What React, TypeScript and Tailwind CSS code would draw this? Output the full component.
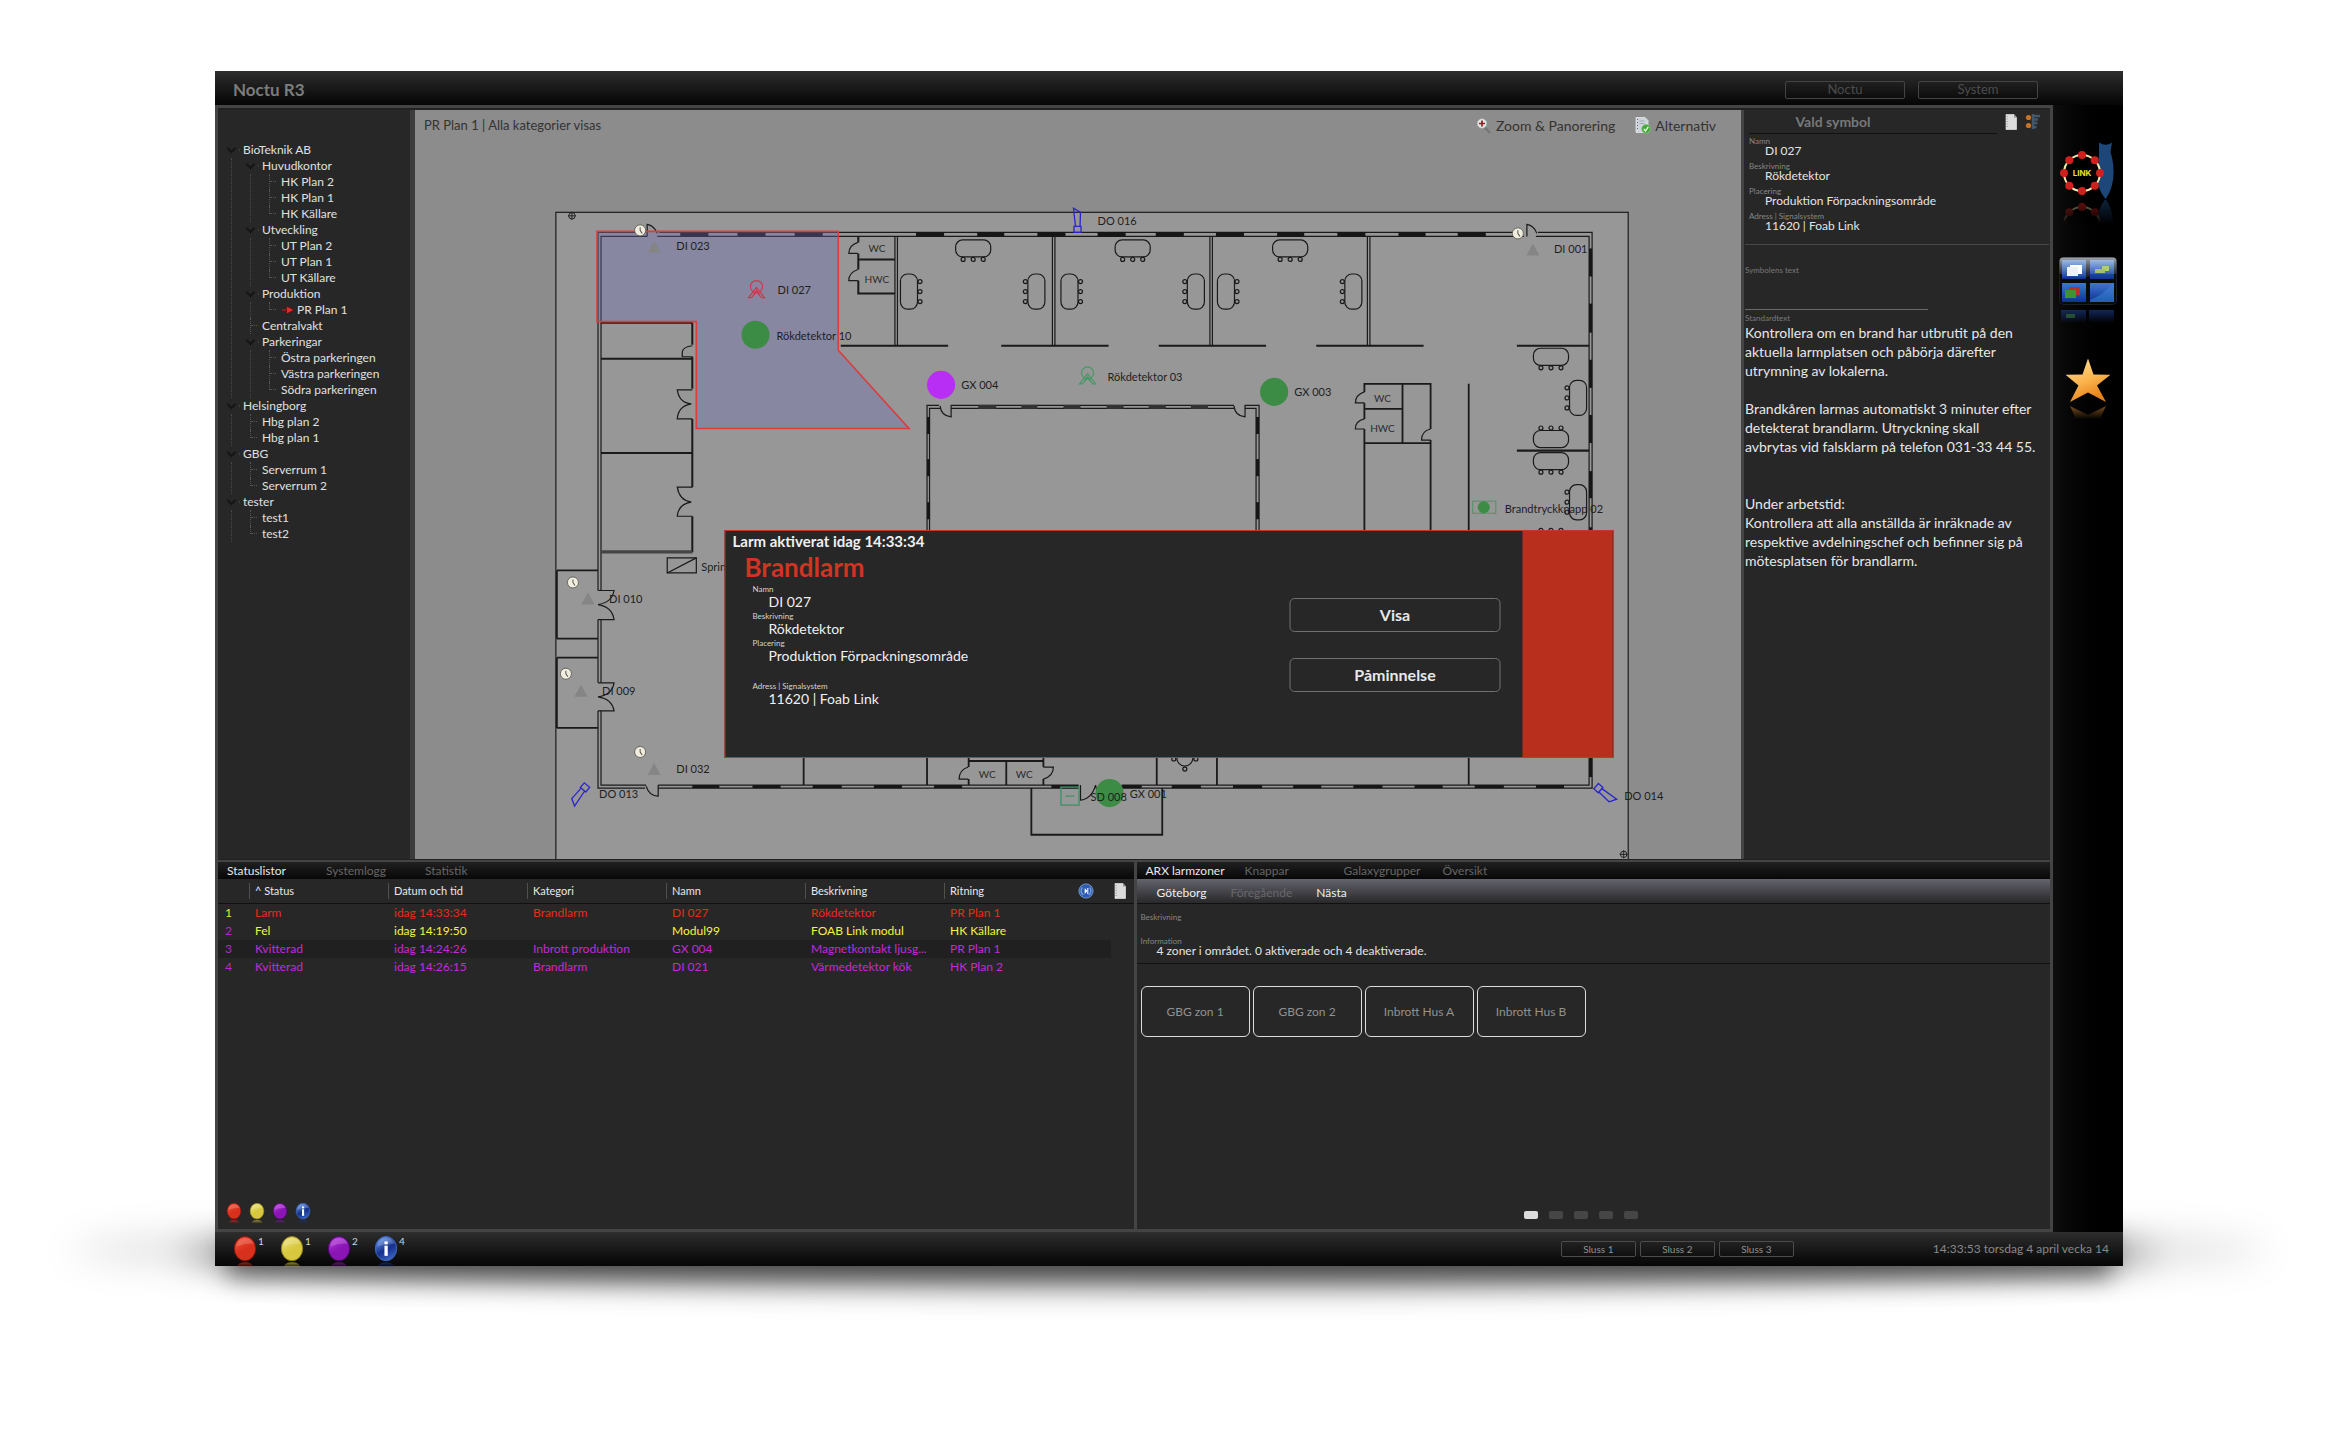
import { useState } from 'react';
import type { ReactNode } from 'react';
import clsx from 'clsx';

/* ---------- data ---------- */

type TreeNode = { name: string; children?: TreeNode[]; current?: boolean };

const sites: TreeNode[] = [
  {
    name: 'BioTeknik AB',
    children: [
      { name: 'Huvudkontor', children: [{ name: 'HK Plan 2' }, { name: 'HK Plan 1' }, { name: 'HK Källare' }] },
      { name: 'Utveckling', children: [{ name: 'UT Plan 2' }, { name: 'UT Plan 1' }, { name: 'UT Källare' }] },
      { name: 'Produktion', children: [{ name: 'PR Plan 1', current: true }] },
      { name: 'Centralvakt' },
      {
        name: 'Parkeringar',
        children: [{ name: 'Östra parkeringen' }, { name: 'Västra parkeringen' }, { name: 'Södra parkeringen' }],
      },
    ],
  },
  { name: 'Helsingborg', children: [{ name: 'Hbg plan 2' }, { name: 'Hbg plan 1' }] },
  { name: 'GBG', children: [{ name: 'Serverrum 1' }, { name: 'Serverrum 2' }] },
  { name: 'tester', children: [{ name: 'test1' }, { name: 'test2' }] },
];

const columns = ['^ Status', 'Datum och tid', 'Kategori', 'Namn', 'Beskrivning'];

const events = [
  { id: 1, idColor: 'text-[#e6e63c]', color: 'text-[#e62c20]', cells: ['Larm', 'idag 14:33:34', 'Brandlarm', 'DI 027', 'Rökdetektor', 'PR Plan 1'] },
  { id: 2, idColor: 'text-[#b42ac6]', color: 'text-[#f4f440]', cells: ['Fel', 'idag 14:19:50', '', 'Modul99', 'FOAB Link modul', 'HK Källare'] },
  { id: 3, idColor: 'text-[#b42ac6]', color: 'text-[#c42ad8]', cells: ['Kvitterad', 'idag 14:24:26', 'Inbrott produktion', 'GX 004', 'Magnetkontakt ljusg...', 'PR Plan 1'] },
  { id: 4, idColor: 'text-[#b42ac6]', color: 'text-[#c42ad8]', cells: ['Kvitterad', 'idag 14:26:15', 'Brandlarm', 'DI 021', 'Värmedetektor kök', 'HK Plan 2'] },
];

const details = [
  ['Namn', 'DI 027'],
  ['Beskrivning', 'Rökdetektor'],
  ['Placering', 'Produktion Förpackningsområde'],
  ['Adress | Signalsystem', '11620 | Foab Link'],
];

/* ---------- small icons ---------- */

type OrbTone = 'red' | 'yellow' | 'purple' | 'info';

const orbTones: Record<OrbTone, [string, string, string]> = {
  red: ['#f0523a', '#d8301c', '#8a1408'],
  yellow: ['#eee27a', '#d8c840', '#8c8018'],
  purple: ['#b83ae0', '#8a14b4', '#4a0668'],
  info: ['#6f9cf0', '#15308c', '#3c66c0'],
};

function Orb({ tone, id, className }: { tone: OrbTone; id: string; className?: string }) {
  const [light, mid, dark] = orbTones[tone];
  return (
    <svg viewBox="0 0 24 32" className={className} aria-hidden="true">
      <defs>
        <linearGradient id={id} x1="0.2" y1="0" x2="0.7" y2="1">
          <stop offset="0" stopColor={light} />
          <stop offset="0.55" stopColor={mid} />
          <stop offset="1" stopColor={tone === 'info' ? dark : mid} />
        </linearGradient>
        <linearGradient id={id + 'r'} x1="0" y1="0" x2="0" y2="1">
          <stop offset="0" stopColor={mid} stopOpacity="0.65" />
          <stop offset="1" stopColor={mid} stopOpacity="0.1" />
        </linearGradient>
      </defs>
      <ellipse cx="12" cy="13" rx="11" ry="12.5" fill={`url(#${id})`} stroke={dark} strokeWidth="1" />
      <path d="M3 11 A9.5 10 0 0 1 21 8 Q13 7 3 11Z" fill="#fff" opacity="0.18" />
      {tone === 'info' && (
        <g fill="#fff">
          <rect x="10.4" y="10" width="3.4" height="10.5" />
          <rect x="10.4" y="5.6" width="3.4" height="3" />
        </g>
      )}
      <path d="M3.5 32 Q4.5 27.2 12 27 Q19.500 27.2 20.500 32Z" fill={`url(#${id}r)`} />
    </svg>
  );
}

function PageIcon({ className }: { className?: string }) {
  return (
    <svg viewBox="0 0 12 16" className={className} aria-hidden="true">
      <path d="M1 0.500 H9 L11.500 3.500 V15.500 H1Z" fill="#dcdcdc" stroke="#f4f4f4" strokeWidth="0.6" />
      <path d="M9 0.500 V3.500 H11.500Z" fill="#8c8c8c" />
      <path d="M2 2v12" stroke="#777" strokeWidth="0.9" strokeDasharray="1 1.500" />
    </svg>
  );
}

function TreeIcon({ className }: { className?: string }) {
  return (
    <svg viewBox="0 0 16 18" className={className} aria-hidden="true">
      <circle cx="3.500" cy="4.500" r="2.600" fill="#c87424" />
      <circle cx="3.500" cy="12.500" r="2.600" fill="#c87424" />
      <path d="M8 1v15M8 3h7M8 6.500h5M8 10h4.500M8 14h3.500" stroke="#43586c" strokeWidth="2.600" fill="none" />
    </svg>
  );
}

function MagnifierIcon({ className }: { className?: string }) {
  return (
    <svg viewBox="0 0 16 16" className={className} aria-hidden="true">
      <path d="M8.500 9 L14 15" stroke="#747474" strokeWidth="2" />
      <circle cx="6" cy="5.500" r="4.800" fill="#e4e4e4" stroke="#a4a4a4" strokeWidth="0.600" />
      <path d="M6 2.500v6M3 5.500h6" stroke="#a01424" strokeWidth="1.700" />
    </svg>
  );
}

function OptionsIcon({ className }: { className?: string }) {
  return (
    <svg viewBox="0 0 16 17" className={className} aria-hidden="true">
      <path d="M1 0.500h9l3 3v12H1Z" fill="#cfd4dc" stroke="#eceef2" strokeWidth="0.700" />
      <path d="M2.500 2v12" stroke="#5c6470" strokeWidth="1" strokeDasharray="1 2" />
      <path d="M4.500 4h5M4.500 6.500h5" stroke="#9aa4b4" strokeWidth="0.900" />
      <circle cx="11" cy="11.800" r="4.400" fill="#46a83c" stroke="#8cd07c" strokeWidth="0.600" />
      <path d="M8.800 12l1.700 1.900 2.800-4" stroke="#e8ffe4" strokeWidth="1.300" fill="none" />
    </svg>
  );
}

function JumpIcon({ className }: { className?: string }) {
  return (
    <svg viewBox="0 0 18 18" className={className} aria-hidden="true">
      <circle cx="9" cy="9" r="8" fill="#2c5cb4" stroke="#88a8dc" strokeWidth="0.900" />
      <path d="M5 5A5.500 5.500 0 0 0 6 13.500M13 5A5.500 5.500 0 0 1 12 13.500" fill="none" stroke="#7ca0dc" strokeWidth="1.400" />
      <path d="M7.500 5.500v7l3-3.500z" fill="#fff" />
      <path d="M11 5.500v7" stroke="#fff" strokeWidth="1.200" />
    </svg>
  );
}

/* ---------- rail icons ---------- */

function LinkLogo() {
  const beads = Array.from({ length: 8 }, (_, i) => (i * Math.PI) / 4);
  return (
    <svg viewBox="0 0 58 82" className="w-[58px]" aria-hidden="true">
      <defs>
        <linearGradient id="linkFade" x1="0" y1="0" x2="0" y2="1">
          <stop offset="0" stopColor="#fff" stopOpacity="0.5" />
          <stop offset="1" stopColor="#fff" stopOpacity="0" />
        </linearGradient>
        <mask id="linkMask">
          <rect x="0" y="58" width="58" height="24" fill="url(#linkFade)" />
        </mask>
        <g id="linkMark">
          <path d="M40 0.500 Q46.500 5 53 0.500 L51.500 10 Q56 24 54 38 Q52 50 46.500 57 Q39 48 38 36 L40 14Z" fill="#1d4679" />
          <circle cx="23" cy="31" r="18" fill="#000" stroke="#f2e8b0" strokeWidth="2" />
          {beads.map((a) => (
            <circle key={a} cx={23 + 18 * Math.cos(a)} cy={31 + 18 * Math.sin(a)} r="4" fill="#d0201c" />
          ))}
        </g>
      </defs>
      <use href="#linkMark" />
      <text x="23" y="34" textAnchor="middle" className="fill-[#f0e020] font-[Inter,sans-serif] text-[8px] font-bold">LINK</text>
      <g mask="url(#linkMask)">
        <use href="#linkMark" transform="translate(0 114) scale(1 -1)" />
      </g>
    </svg>
  );
}

function WindowsIcon() {
  return (
    <svg viewBox="0 0 58 68" className="w-[58px]" aria-hidden="true">
      <defs>
        <linearGradient id="pane" x1="0" y1="0" x2="0" y2="1">
          <stop offset="0" stopColor="#3c78d0" />
          <stop offset="1" stopColor="#0c3490" />
        </linearGradient>
        <linearGradient id="gloss" x1="0" y1="0" x2="0" y2="1">
          <stop offset="0" stopColor="#dfe6ee" stopOpacity="0.7" />
          <stop offset="1" stopColor="#9ab0cc" stopOpacity="0.1" />
        </linearGradient>
        <linearGradient id="paneFade" x1="0" y1="0" x2="0" y2="1">
          <stop offset="0" stopColor="#1c3f94" stopOpacity="0.6" />
          <stop offset="1" stopColor="#1c3f94" stopOpacity="0" />
        </linearGradient>
      </defs>
      <rect x="0.500" y="0.500" width="57" height="47" rx="4" fill="#08090b" stroke="#1c1e22" />
      <rect x="3" y="3" width="24" height="19" fill="url(#pane)" />
      <rect x="31" y="3" width="24" height="19" fill="url(#pane)" />
      <rect x="3" y="26" width="24" height="19" fill="url(#pane)" />
      <rect x="31" y="26" width="24" height="19" fill="url(#pane)" />
      <path d="M31 43 Q44 38 53 27 H55 V45 H31Z" fill="#4484dc" opacity="0.5" />
      <path d="M0.500 17 V4 Q0.500 0.500 4 0.500 H54 Q57.500 0.500 57.500 4 V17 H31 V20 H3 V17Z" fill="url(#gloss)" />
      <rect x="11" y="8" width="12" height="9" fill="#fff" />
      <rect x="8" y="10" width="11" height="9" fill="#eef1f4" />
      <rect x="43" y="9" width="7" height="5" fill="#b4cc70" />
      <rect x="36" y="12" width="10" height="4" fill="#a4c068" />
      <rect x="10" y="30" width="11" height="8" fill="#b83028" />
      <rect x="6" y="33" width="11" height="8" fill="#3c9434" />
      <path d="M2 53h25v13h-25ZM30 53h25v13h-25Z" fill="url(#paneFade)" />
      <path d="M7 57h9v4H7z" fill="#3c8434" opacity="0.5" />
    </svg>
  );
}

function StarIcon() {
  return (
    <svg viewBox="0 0 46 62" className="w-[46px]" aria-hidden="true">
      <defs>
        <linearGradient id="star" x1="0" y1="0" x2="0.4" y2="1">
          <stop offset="0" stopColor="#ffe49c" />
          <stop offset="0.6" stopColor="#fbb34c" />
          <stop offset="1" stopColor="#e8821c" />
        </linearGradient>
        <linearGradient id="starFade" x1="0" y1="0" x2="0" y2="1">
          <stop offset="0" stopColor="#c87c30" stopOpacity="0.6" />
          <stop offset="1" stopColor="#c87c30" stopOpacity="0" />
        </linearGradient>
      </defs>
      <path d="M23 0.500 L28.500 16.500 L45.500 16.800 L32 27.500 L41 44 L23 34.500 L5 44 L13.500 27.500 L0.500 16.800 L17.500 16.500Z" fill="url(#star)" />
      <path d="M5 48 L23 57 L41 48 L35 61 H11Z" fill="url(#starFade)" />
    </svg>
  );
}

/* ---------- floor plan ---------- */

const northWindows = [[681, 28], [738, 28], [795, 28], [916, 28], [977, 27], [1037, 28], [1097, 28], [1155, 28], [1215, 28], [1276, 27], [1336, 28], [1397, 27], [1456, 28]];
const southWindows = [[693, 27], [753, 28], [813, 29], [874, 28], [934, 28], [1051, 27], [1121, 20], [1171, 29], [1232, 29], [1292, 28], [1352, 29], [1413, 28], [1473, 29], [1534, 28]];
const eastWindows = [[249, 28], [304, 29], [360, 28], [415, 28], [471, 27], [527, 28], [748, 28]];
const yardWindows = [[978, 18], [1021, 16], [1063, 17], [1106, 17], [1148, 17], [1190, 17]];

const labels: [number, number, string][] = [
  [677, 251, 'DI 023'],
  [778, 294, 'DI 027'],
  [777, 340, 'Rökdetektor 10'],
  [961, 389, 'GX 004'],
  [1097, 226, 'DO 016'],
  [1552, 254, 'DI 001'],
  [1107, 381, 'Rökdetektor 03'],
  [1293, 396, 'GX 003'],
  [1503, 513, 'Brandtryckknapp 02'],
  [610, 602, 'DI 010'],
  [603, 694, 'DI 009'],
  [677, 772, 'DI 032'],
  [600, 797, 'DO 013'],
  [1090, 800, 'SD 008'],
  [1129, 797, 'GX 001'],
  [1622, 799, 'DO 014'],
  [702, 571, 'Sprinkler'],
];

function Desk({ x, y, side }: { x: number; y: number; side: 'top' | 'bottom' | 'left' | 'right' }) {
  const angle = { bottom: 0, left: 90, top: 180, right: 270 }[side];
  return (
    <g transform={`translate(${x} ${y}) rotate(${angle})`}>
      <rect x="-17.500" y="-8.500" width="35" height="17" rx="7" />
      {[-10, 0, 10].map((c) => (
        <circle key={c} cx={c} cy="11" r="2" />
      ))}
    </g>
  );
}

function Detector({ x, y, color }: { x: number; y: number; color: string }) {
  return (
    <g transform={`translate(${x} ${y})`} fill="none" stroke={color} strokeWidth="1.200">
      <circle r="6" cy="-3" />
      <path d="M-8 8 L0 -2 L8 8 H5 L0 2 L-5 8Z" />
      <path d="M-3 5 L0 1 L3 5" />
    </g>
  );
}

function Camera({ x, y, angle }: { x: number; y: number; angle: number }) {
  return (
    <path
      transform={`translate(${x} ${y}) rotate(${angle})`}
      d="M-3.500 0 V-6 H3.500 V0Z M-2 -6 L-4 -24 L3 -20 L2.500 -6"
      fill="none"
      stroke="#2a24d0"
      strokeWidth="1.300"
    />
  );
}

function FloorPlan() {
  return (
    <svg
      viewBox="415 111 1325 747"
      preserveAspectRatio="xMidYMid slice"
      className="absolute inset-0 h-full w-full"
      role="img"
      aria-label="PR Plan 1"
    >
      <rect x="557" y="213" width="1069" height="660" fill="#979797" stroke="#1c1c1c" strokeWidth="1.200" />

      <g fill="none" stroke="#1a1a1a" strokeWidth="1.200">
        {/* registration marks */}
        <g strokeWidth="0.900">
          <path d="M573 212.500v8M569 216.500h8M1621.500 849v8M1617.500 853h8" />
          <circle cx="573" cy="216.500" r="3.200" />
          <circle cx="1621.500" cy="853" r="3.200" />
        </g>

        {/* outer walls */}
        <path d="M599 590V233H646M660 233H1520M1536 233H1590V787H1121M1078 787H659M646 787H599V710M599 682V619" />
        <path d="M602 590V237H648M658 237H1522M1534 237H1587V784H1121M1078 784H659M647 784H602V710M602 682V619" />
        <path d="M648 237V225Q655 226 658 234M1525 237V225Q1532 226 1535 234" />
        <path d="M659 784V795Q650 795 647 785M1080 784V799Q1091 798 1095 784Q1097 797 1108 798" />

        {/* west annex */}
        <path d="M558 570H599M558 638H599M558 657H599M558 727H599M558 570V638M558 657V727" strokeWidth="1.800" />
        <path d="M599 590H615Q613 602 599 604Q613 606 615 619H599M599 682H615Q613 694 599 696Q613 698 615 710H599" />

        {/* west rooms */}
        <path d="M602 359H693M602 453H693M602 323H693M693 323V345M693 357V389M693 419V487M693 516V552" strokeWidth="2" />
        <path d="M602 551.500H693" stroke="#444" strokeWidth="3" />
        <path d="M693 357H683V352Q684 347 693 346" />
        <path d="M693 390H678Q680 403 692 404Q679 406 678 419H693M693 487H678Q680 500 692 502Q679 504 678 516H693" />
        <path d="M668 557.500h29v15h-29z" />
        <path d="M668 572.500L697 557.500" />

        {/* toilets north */}
        <path d="M858.500 237V243M858.500 254V270M858.500 281V294H895M858.500 260H895" strokeWidth="2" />
        <path d="M858 243Q849 246 849 254H858M858 270Q849 273 849 281H858" />

        {/* offices */}
        <path d="M895 237V346M897.500 237V346M1052 237V346M1054.500 237V346M1209 237V346M1211.500 237V346M1366 237V346M1368.500 237V346" />
        <path d="M841 346H948M1001 346H1108M1158 346H1265M1315 346H1422M1515 346H1587M1515 450.500H1587" strokeWidth="2.200" />

        {/* courtyard */}
        <path d="M939 405.500H927V540M940 408.500H929.500V540M951 405.500H1233M951 408.500H1233M1244 405.500H1258V540M1244 408.500H1255V540" />
        <path d="M951 405V417Q941 416 940 406M1244 405V417Q1234 416 1233 406" />

        {/* toilets middle */}
        <path d="M1363 392V384H1429V429M1429 440V540M1363 403V419M1363 429V540M1401 384V443M1363 409H1401M1363 443H1429" strokeWidth="1.800" />
        <path d="M1363 392Q1354 395 1354 403H1363M1363 419Q1354 421 1354 429H1363M1429 429Q1420 431 1420 440H1429" />
        <path d="M1467 384V540M1467 750V784M804 750V784M927 750V784M1156 750V784M1216 750V784" strokeWidth="1.800" />

        {/* toilets south */}
        <path d="M968.500 750V766M968.500 778V784M1006 760V784M1043 750V766M1043 778V784M968.500 760H1043" strokeWidth="1.800" />
        <path d="M968 766Q959 769 959 778H968M1043 766H1053Q1053 775 1043 778" />
        <circle cx="1184" cy="757" r="8" />
        <circle cx="1184" cy="768" r="2" />
        <circle cx="1173" cy="758" r="2" />
        <circle cx="1195" cy="758" r="2" />
        <path d="M1031 787V833.500H1161.500V787" strokeWidth="1.800" />

        <Desk x={973} y={249} side="bottom" />
        <Desk x={1132} y={249} side="bottom" />
        <Desk x={1289} y={249} side="bottom" />
        <Desk x={909} y={292} side="right" />
        <Desk x={1036} y={292} side="left" />
        <Desk x={1069} y={292} side="right" />
        <Desk x={1195} y={292} side="left" />
        <Desk x={1225} y={292} side="right" />
        <Desk x={1352} y={292} side="left" />
        <Desk x={1549} y={357} side="bottom" />
        <Desk x={1576} y={398} side="left" />
        <Desk x={1549} y={439} side="top" />
        <Desk x={1549} y={461} side="bottom" />
        <Desk x={1576} y={502} side="left" />
        <Desk x={1549} y={541} side="top" />
      </g>

      <g fill="#161616">
        {northWindows.map(([x, w]) => (
          <rect key={x} x={x} y="233" width={w} height="4" />
        ))}
        {southWindows.map(([x, w]) => (
          <rect key={x} x={x} y="784" width={w} height="3" />
        ))}
        {eastWindows.map(([y, h]) => (
          <rect key={y} x="1587" y={y} width="3" height={h} />
        ))}
        {yardWindows.map(([x, w]) => (
          <rect key={x} x={x} y="405" width={w} height="4" fill="#333" />
        ))}
        {[417, 459, 502].map((y) => (
          <g key={y}>
            <rect x="927" y={y} width="3" height="17" />
            <rect x="1255" y={y} width="3" height="17" />
          </g>
        ))}
      </g>

      <g className="text-[10px]" fill="#2c2c2c" textAnchor="middle">
        <text x="877" y="253">WC</text>
        <text x="877" y="283">HWC</text>
        <text x="1381" y="402">WC</text>
        <text x="1381" y="432">HWC</text>
        <text x="987" y="777">WC</text>
        <text x="1024" y="777">WC</text>
      </g>

      {/* alarm zone */}
      <path
        d="M598 232H838.500V350.500L909 428.500H697V322H598Z"
        fill="#6c6cb4"
        fillOpacity="0.36"
        stroke="#dc3c3c"
        strokeWidth="1.600"
      />

      <g fill="#858585">
        {[[655, 247], [1531, 250], [589, 598], [582, 690], [655, 768]].map(([x, y]) => (
          <path key={`${x}-${y}`} d={`M${x} ${y - 6}l6.500 12h-13z`} />
        ))}
      </g>
      {[[641, 231], [1516, 234], [574, 582], [567, 673], [641, 751]].map(([x, y]) => (
        <g key={`${x}-${y}`} stroke="#55524a" fill="none">
          <circle cx={x} cy={y} r="5.500" fill="#f0ede0" strokeWidth="0.800" />
          <path d={`M${x} ${y - 3}v3l2 3`} strokeWidth="1" />
        </g>
      ))}

      <Detector x={757} y={290} color="#cc3a50" />
      <Detector x={1087} y={376} color="#489868" />
      <circle cx="756" cy="335" r="14" fill="#3c8c46" />
      <circle cx="941" cy="385" r="14" fill="#b82ef4" />
      <circle cx="1273" cy="392" r="14" fill="#3c8c46" />
      <circle cx="1109" cy="792" r="14" fill="#3c8c46" />
      <rect x="1471" y="501" width="23" height="12" fill="none" stroke="#4c9468" />
      <circle cx="1482" cy="507" r="6" fill="#3c8c46" />
      <rect x="1060.500" y="786" width="18" height="18" fill="none" stroke="#3c9468" strokeWidth="1.400" />
      <path d="M1065 795h9" stroke="#3c9468" strokeWidth="1.200" />
      <Camera x={1077} y={233} angle={0} />
      <Camera x={588} y={784} angle={220} />
      <Camera x={1594} y={785} angle={132} />

      <g className="text-[11px]" fill="#1e1e1e">
        {labels.map(([x, y, text]) => (
          <text key={text} x={x} y={y}>{text}</text>
        ))}
      </g>
    </svg>
  );
}

/* ---------- panels ---------- */

function Tree({ nodes, nested }: { nodes: TreeNode[]; nested?: boolean }) {
  return (
    <ul className={clsx(nested && 'ml-[5px] border-l border-dotted border-[#484848] pl-[13px]')}>
      {nodes.map((node, i) => (
        <li key={node.name}>
          <button type="button" className="flex h-4 items-start text-[12px] leading-4 whitespace-nowrap text-[#e0e0e0]">
            {node.children ? (
              <svg viewBox="0 0 17 16" className="h-4 w-[17px]" aria-hidden="true">
                <path d="M1.500 6L5.500 10L9.500 6" fill="none" stroke="#151515" strokeWidth="2" />
                <path d="M13 8h1" stroke="#585858" />
              </svg>
            ) : (
              <span
                className={clsx(
                  'mr-[5px] ml-[5px] w-[7px] border-l border-dotted border-[#555]',
                  i === nodes.length - 1 ? 'h-2' : 'h-4',
                )}
              >
                <span className="block h-2 border-b border-dotted border-[#555]" />
              </span>
            )}
            {node.current && (
              <svg viewBox="0 0 16 16" className="h-4 w-4" aria-hidden="true">
                <path d="M1 8H7" stroke="#a41c1c" strokeWidth="1.600" />
                <path d="M5.500 4L13 8L5.500 12Z" fill="#e02c2c" stroke="#5c0c0c" strokeWidth="0.800" />
              </svg>
            )}
            <span>{node.name}</span>
          </button>
          {node.children && <Tree nodes={node.children} nested />}
        </li>
      ))}
    </ul>
  );
}

function TabBar({ tabs }: { tabs: string[] }) {
  const [active, setActive] = useState(tabs[0]);
  return (
    <div className="flex h-[17px] bg-linear-to-b from-[#202020] to-[#080808] pl-[9px]" role="tablist">
      {tabs.map((tab) => (
        <button
          key={tab}
          type="button"
          role="tab"
          aria-selected={tab === active}
          onClick={() => setActive(tab)}
          className={clsx('w-[99px] text-left text-[12px] leading-4', tab === active ? 'text-[#e8e8e8]' : 'text-[#666]')}
        >
          {tab}
        </button>
      ))}
    </div>
  );
}

function OutlineButton({ children, className }: { children: ReactNode; className: string }) {
  return (
    <button type="button" className={clsx('flex items-center justify-center rounded-[2px] border', className)}>
      {children}
    </button>
  );
}

function DetailsPanel() {
  return (
    <aside className="w-[309px] shrink-0 border-l-[3px] border-[#444] bg-[#272727] px-px">
      <div className="flex h-6 items-center gap-2 pr-2 pl-1">
        <h2 className="flex h-6 flex-1 items-center justify-center border-b border-[#111] pr-20 text-[14px] font-bold text-[#787878]">
          Vald symbol
        </h2>
        <button type="button" aria-label="Dokument"><PageIcon className="h-4 w-3" /></button>
        <button type="button" aria-label="Struktur"><TreeIcon className="h-[18px] w-4" /></button>
      </div>
      <dl className="h-[111px] border-b border-[#484848] pt-px pl-1">
        {details.map(([label, value]) => (
          <div key={label} className="h-[25px]">
            <dt className="pt-px text-[8px] leading-[10px] text-[#868686]">{label}</dt>
            <dd className="pl-4 text-[12px] leading-[10px] text-[#e4e4e4]">{value}</dd>
          </div>
        ))}
      </dl>
      <h3 className="h-[65px] w-[183px] border-b border-[#6a6a6a] pt-5 text-[8px] leading-[10px] text-[#7a7a7a]">Symbolens text</h3>
      <h3 className="pt-[3px] text-[8px] leading-[10px] text-[#7a7a7a]">Standardtext</h3>
      <p className="text-[14px] leading-[19px] whitespace-pre-line text-[#e8e8e8]">
        {`Kontrollera om en brand har utbrutit på den
        aktuella larmplatsen och påbörja därefter
        utrymning av lokalerna.

        Brandkåren larmas automatiskt 3 minuter efter
        detekterat brandlarm. Utryckning skall
        avbrytas vid falsklarm på telefon 031-33 44 55.


        Under arbetstid:
        Kontrollera att alla anställda är inräknade av
        respektive avdelningschef och befinner sig på
        mötesplatsen för brandlarm.`}
      </p>
    </aside>
  );
}

function StatusPanel() {
  return (
    <section className="flex min-w-0 grow-[916] basis-0 flex-col bg-[#272727]">
      <TabBar tabs={['Statuslistor', 'Systemlogg', 'Statistik']} />
      <table className="w-full table-fixed text-left text-[12px] leading-[18px]">
        <colgroup>
          <col className="w-[31px]" />
          <col className="w-[139px]" />
          <col className="w-[139px]" />
          <col className="w-[139px]" />
          <col className="w-[139px]" />
          <col className="w-[139px]" />
          <col />
          <col className="w-[22px]" />
        </colgroup>
        <thead>
          <tr className="h-[24px] border-b border-[#111] text-[11px] text-[#e8e8e8]">
            <th aria-label="Nummer" />
            {columns.map((column) => (
              <th key={column} className="font-normal">
                <div className="border-l border-[#505050] pl-[5px] leading-4">{column}</div>
              </th>
            ))}
            <th colSpan={2} className="font-normal">
              <div className="flex h-4 items-center border-l border-[#505050] pr-2 pl-[5px]">
                <span className="flex-1">Ritning</span>
                <button type="button" aria-label="Visa nästa"><JumpIcon className="mr-5 h-4 w-4" /></button>
                <button type="button" aria-label="Logga"><PageIcon className="h-4 w-3" /></button>
              </div>
            </th>
          </tr>
        </thead>
        <tbody>
          {events.map((event) => (
            <tr key={event.id} className="h-[18px]">
              <td className={clsx('pl-[7px]', event.idColor, event.id === 3 && 'bg-[#202020]')}>{event.id}</td>
              {event.cells.map((cell, i) => (
                <td key={i} className={clsx('pl-[6px] whitespace-nowrap', event.color, event.id === 3 && 'bg-[#202020]')}>
                  {cell}
                </td>
              ))}
              <td />
            </tr>
          ))}
        </tbody>
      </table>
      <div className="mt-auto flex gap-[7px] pb-[6px] pl-2">
        {(['red', 'yellow', 'purple', 'info'] as OrbTone[]).map((tone) => (
          <button key={tone} type="button" aria-label={`Filter ${tone}`}>
            <Orb tone={tone} id={`small-${tone}`} className="h-5 w-4" />
          </button>
        ))}
      </div>
    </section>
  );
}

function ZonePanel() {
  return (
    <section className="flex min-w-0 grow-[914] basis-0 flex-col border-l-[3px] border-[#444] bg-[#272727]">
      <TabBar tabs={['ARX larmzoner', 'Knappar', 'Galaxygrupper', 'Översikt']} />
      <div className="flex h-[25px] items-center gap-6 border-b border-[#111] bg-linear-to-b from-[#64646e] to-[#29292b] pt-1 pl-5 text-[12px]">
        <button type="button" className="text-[#f0f0f0]">Göteborg</button>
        <button type="button" className="text-[#68686c]" disabled>Föregående</button>
        <button type="button" className="text-[#f0f0f0]">Nästa</button>
      </div>
      <dl className="h-[60px] border-b border-[#111] pt-2 pl-1">
        <dt className="h-6 text-[8px] leading-[10px] text-[#868686]">Beskrivning</dt>
        <dt className="text-[8px] leading-[10px] text-[#868686]">Information</dt>
        <dd className="pl-4 text-[12px] leading-[10px] text-[#e4e4e4]">4 zoner i området. 0 aktiverade och 4 deaktiverade.</dd>
      </dl>
      <div className="flex gap-[3px] pt-[22px] pl-1">
        {['GBG zon 1', 'GBG zon 2', 'Inbrott Hus A', 'Inbrott Hus B'].map((zone) => (
          <button
            key={zone}
            type="button"
            className="h-[51px] w-[109px] rounded-[6px] border border-[#dcdcdc] text-[12px] text-[#929292]"
          >
            {zone}
          </button>
        ))}
      </div>
      <div className="mt-auto flex justify-center gap-[11px] pr-6 pb-[10px]">
        {[1, 2, 3, 4, 5].map((page) => (
          <button
            key={page}
            type="button"
            aria-label={`Sida ${page}`}
            className={clsx('h-2 w-[14px] rounded-[2px]', page === 1 ? 'bg-[#dcdcdc]' : 'bg-[#464646]')}
          />
        ))}
      </div>
    </section>
  );
}

function AlarmDialog() {
  return (
    <div
      role="dialog"
      aria-labelledby="alarm-title"
      className="absolute top-[459px] left-1/2 flex h-[228px] w-[889px] -translate-x-1/2 border border-[#c0392b] bg-[#272727]"
    >
      <div className="flex-1 pl-[7px]">
        <p className="h-[22px] text-[15px] leading-5 font-bold text-[#f0f0f0]">Larm aktiverat idag 14:33:34</p>
        <h2 id="alarm-title" className="pl-3 text-[26px] leading-7 font-bold text-[#d23322]">Brandlarm</h2>
        <dl className="pt-[3px] pl-5">
          {details.map(([label, value]) => (
            <div key={label} className="h-[27px] last:mt-4">
              <dt className="text-[8px] leading-[10px] text-[#d4d4d4]">{label}</dt>
              <dd className="pl-4 text-[14px] leading-[15px] text-[#f0f0f0]">{value}</dd>
            </div>
          ))}
        </dl>
      </div>
      <div className="mr-[22px] flex w-[211px] flex-col gap-[26px] pt-[67px]">
        {['Visa', 'Påminnelse'].map((action) => (
          <button key={action} type="button" className="h-[34px] rounded-[5px] border border-[#707070] text-[16px] font-bold text-[#e8e8e8]">
            {action}
          </button>
        ))}
      </div>
      <div className="w-[90px] bg-[#b92f1e]" />
    </div>
  );
}

export default function App() {
  return (
    <div className="flex min-h-screen flex-col overflow-hidden bg-white px-[215px] pt-[71px] pb-[174px] font-[Lato,Carlito,sans-serif]">
      <div className="relative flex flex-1 flex-col">
        {/* drop shadow on the table */}
        <div className="absolute -inset-x-36 -bottom-3 h-14 rounded-[50%] bg-black/15 blur-[18px]" />
        <div className="absolute -inset-x-8 -bottom-5 h-16 rounded-[50%] bg-black/40 blur-[16px]" />
        <div className="absolute inset-x-3 -bottom-3 h-10 bg-black/50 blur-[12px]" />

        <div className="relative flex flex-1 flex-col bg-black">
          <header className="flex h-[34px] items-center bg-linear-to-b from-[#2e2e2e] to-[#060606] pt-1 pr-[85px] pl-[18px]">
            <h1 className="flex-1 text-[17px] leading-6 font-bold text-[#7c7c7c]">Noctu R3</h1>
            <div className="flex gap-[13px]">
              <OutlineButton className="h-[18px] w-[120px] border-[#444] text-[13px] text-[#4c4c4c]">Noctu</OutlineButton>
              <OutlineButton className="h-[18px] w-[120px] border-[#444] text-[13px] text-[#4c4c4c]">System</OutlineButton>
            </div>
          </header>

          <div className="flex flex-1">
            <main className="flex min-w-0 flex-1 flex-col border-[3px] border-[#444]">
              <div className="flex grow-[750] basis-0 border-t-2 border-b border-[#222]">
                <nav className="w-[192px] shrink-0 bg-[#272727] pt-[32px] pl-2">
                  <Tree nodes={sites} />
                </nav>
                <section className="relative min-w-0 flex-1 border-l-[5px] border-[#3c3c3c] bg-[#8c8c8c]">
                  <FloorPlan />
                  <div className="relative flex items-center px-[9px] pt-[5px] text-[#333]">
                    <h2 className="flex-1 text-[13px]">PR Plan 1 | Alla kategorier visas</h2>
                    <div className="flex gap-5 pr-4 text-[14px]">
                      <button type="button" className="flex items-center gap-1"><MagnifierIcon className="h-4 w-4" />Zoom &amp; Panorering</button>
                      <button type="button" className="flex items-center gap-1"><OptionsIcon className="h-[17px] w-4" />Alternativ</button>
                    </div>
                  </div>
                </section>
                <DetailsPanel />
              </div>
              <div className="flex grow-[367] basis-0 border-t-2 border-[#444]">
                <StatusPanel />
                <ZonePanel />
              </div>
            </main>

            <aside className="flex w-[70px] shrink-0 flex-col items-center bg-linear-to-r from-[#0e0e0e] to-black pt-[37px]">
              <button type="button" aria-label="Link"><LinkLogo /></button>
              <button type="button" aria-label="Fönster" className="mt-[33px]"><WindowsIcon /></button>
              <button type="button" aria-label="Favoriter" className="mt-[33px]"><StarIcon /></button>
            </aside>
          </div>

          <footer className="flex h-[34px] items-center bg-linear-to-b from-[#2e2e2e] to-[#060606] pr-[14px] pl-[18px]">
            <div className="flex flex-1 pt-1">
              {([['red', 1], ['yellow', 1], ['purple', 2], ['info', 4]] as [OrbTone, number][]).map(([tone, count]) => (
                <button key={tone} type="button" className="flex w-[47px] items-start gap-px text-[10px] leading-[11px] text-[#d4d4d4]">
                  <Orb tone={tone} id={`big-${tone}`} className="h-[31px] w-6" />
                  {count}
                </button>
              ))}
            </div>
            <div className="flex gap-1 pr-[139px]">
              {['Sluss 1', 'Sluss 2', 'Sluss 3'].map((door) => (
                <OutlineButton key={door} className="h-4 w-[75px] border-[#4c4c4c] text-[10px] text-[#909090]">{door}</OutlineButton>
              ))}
            </div>
            <time className="text-[12px] text-[#888]">14:33:53 torsdag 4 april vecka 14</time>
          </footer>

          <AlarmDialog />
        </div>
      </div>
    </div>
  );
}
